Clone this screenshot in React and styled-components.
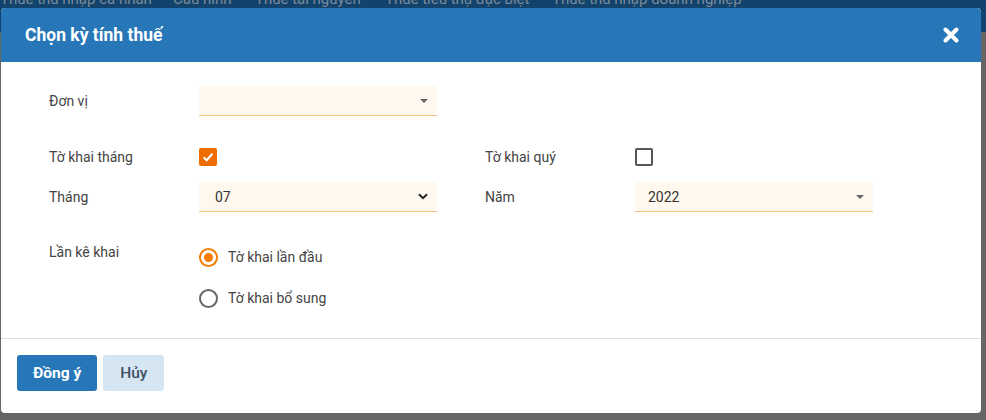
import React, { useState } from "react";
import styled, { createGlobalStyle } from "styled-components";

const GlobalStyle = createGlobalStyle`
  html, body {
    margin: 0;
    padding: 0;
    width: 986px;
    height: 420px;
    overflow: hidden;
    font-family: Roboto, "Liberation Sans", sans-serif;
  }
`;

const Page = styled.div`
  position: relative;
  width: 986px;
  height: 420px;
  background: #666666;
  overflow: hidden;
`;

const TopNav = styled.nav`
  height: 32px;
  background: #11436c;
  display: flex;
  align-items: flex-start;
  font-size: 15px;
  color: #7d8a97;
  white-space: nowrap;
`;

const NavItem = styled.span`
  display: block;
  flex: none;
  width: ${({ $w }) => ($w ? `${$w}px` : "auto")};
  margin-top: -10px;
`;

const Modal = styled.div`
  position: absolute;
  left: 1px;
  top: 8px;
  width: 980px;
  height: 405px;
  background: #fff;
  border-radius: 4px;
  overflow: hidden;
  display: flex;
  flex-direction: column;
`;

const Header = styled.div`
  height: 54px;
  flex: none;
  background: #2777b8;
  display: flex;
  align-items: center;
  justify-content: space-between;
  padding: 0 22px 0 24px;
`;

const Title = styled.h4`
  margin: 0;
  color: #fff;
  font-size: 17.5px;
  font-weight: 700;
`;

const CloseButton = styled.button`
  border: 0;
  background: none;
  padding: 0;
  display: flex;
  cursor: pointer;
`;

const Body = styled.div`
  flex: 1;
  padding: 24px 0 0 48px;
  border-bottom: 1px solid #dcdfe8;
`;

const Row = styled.div`
  display: grid;
  grid-template-columns: 150px 238px 48px 150px 238px;
  align-items: center;
  height: ${({ $h }) => $h || 30}px;
  margin-bottom: ${({ $mb }) => $mb || 0}px;
`;

const Label = styled.label`
  font-size: 14px;
  color: #444;
  align-self: ${({ $top }) => ($top ? "start" : "center")};
`;

const SelectBox = styled.div`
  height: 30px;
  box-sizing: border-box;
  background: #fef8ee;
  border-bottom: 1px solid #f6c47f;
  display: flex;
  align-items: center;
  justify-content: space-between;
  padding: 0 9px 0 ${({ $pl }) => $pl || 13}px;
  font-size: 14px;
  color: #333;
`;

const Caret = styled.span`
  width: 0;
  height: 0;
  border-left: 4px solid transparent;
  border-right: 4px solid transparent;
  border-top: 4px solid #666;
`;

const Check = styled.span`
  width: 18px;
  height: 18px;
  box-sizing: border-box;
  border-radius: 2px;
  background: ${({ $on }) => ($on ? "#ef6c00" : "#fff")};
  border: ${({ $on }) => ($on ? "none" : "2px solid #555")};
  display: flex;
  align-items: center;
  justify-content: center;
  cursor: pointer;
`;

const RadioGroup = styled.div`
  display: flex;
  flex-direction: column;
  gap: 22px;
  margin-top: -3px;
`;

const RadioItem = styled.label`
  display: flex;
  align-items: center;
  gap: 10px;
  font-size: 14px;
  color: #444;
  cursor: pointer;
`;

const RadioCircle = styled.span`
  width: 19px;
  height: 19px;
  box-sizing: border-box;
  border-radius: 50%;
  border: 2px solid ${({ $on }) => ($on ? "#f57c00" : "#666")};
  display: flex;
  align-items: center;
  justify-content: center;
  &::after {
    content: "";
    width: 9px;
    height: 9px;
    border-radius: 50%;
    background: ${({ $on }) => ($on ? "#f57c00" : "transparent")};
  }
`;

const Footer = styled.div`
  height: 74px;
  flex: none;
  display: flex;
  align-items: flex-start;
  gap: 6px;
  padding: 16px 0 0 16px;
  box-sizing: border-box;
`;

const Button = styled.button`
  height: 36px;
  border: 0;
  border-radius: 3px;
  font-family: Roboto, "Liberation Sans", sans-serif;
  font-size: 15.5px;
  padding: 0 ${({ $px }) => $px || 16}px;
  background: ${({ $primary }) => ($primary ? "#2777b8" : "#d6e5f2")};
  color: ${({ $primary }) => ($primary ? "#fff" : "#3d4f63")};
  font-weight: ${({ $primary }) => ($primary ? 700 : 500)};
  cursor: pointer;
`;

const CheckIcon = () => (
  <svg width="12" height="10" viewBox="0 0 12 10">
    <path d="M1.5 5.2 L4.6 8.2 L10.5 1.8" fill="none" stroke="#fff" strokeWidth="2" />
  </svg>
);

const CloseIcon = () => (
  <svg width="16" height="16" viewBox="0 0 16 16">
    <path d="M2.5 2.5 L13.5 13.5 M13.5 2.5 L2.5 13.5" stroke="#fff" strokeWidth="4" strokeLinecap="round" />
  </svg>
);

const Chevron = () => (
  <svg width="10" height="7" viewBox="0 0 10 7">
    <path d="M1 1.2 L5 5.2 L9 1.2" fill="none" stroke="#222" strokeWidth="2" />
  </svg>
);

export default function App() {
  const [monthly, setMonthly] = useState(true);
  const [quarterly, setQuarterly] = useState(false);
  const [first, setFirst] = useState(true);

  return (
    <Page>
      <GlobalStyle />
      <TopNav>
        <NavItem $w={173}>Thuế thu nhập cá nhân</NavItem>
        <NavItem $w={82}>Cấu hình</NavItem>
        <NavItem $w={130}>Thuế tài nguyên</NavItem>
        <NavItem $w={167}>Thuế tiêu thụ đặc biệt</NavItem>
        <NavItem>Thuế thu nhập doanh nghiệp</NavItem>
      </TopNav>
      <Modal>
        <Header>
          <Title>Chọn kỳ tính thuế</Title>
          <CloseButton>
            <CloseIcon />
          </CloseButton>
        </Header>
        <Body>
          <Row $mb={26}>
            <Label>Đơn vị</Label>
            <SelectBox>
              <span />
              <Caret />
            </SelectBox>
          </Row>
          <Row $mb={10}>
            <Label>Tờ khai tháng</Label>
            <div>
              <Check $on={monthly} onClick={() => setMonthly(!monthly)}>
                {monthly && <CheckIcon />}
              </Check>
            </div>
            <span />
            <Label>Tờ khai quý</Label>
            <div>
              <Check $on={quarterly} onClick={() => setQuarterly(!quarterly)}>
                {quarterly && <CheckIcon />}
              </Check>
            </div>
          </Row>
          <Row $mb={32}>
            <Label>Tháng</Label>
            <SelectBox $pl={16}>
              <span>07</span>
              <Chevron />
            </SelectBox>
            <span />
            <Label>Năm</Label>
            <SelectBox>
              <span>2022</span>
              <Caret />
            </SelectBox>
          </Row>
          <Row $h={70}>
            <Label $top>Lần kê khai</Label>
            <RadioGroup>
              <RadioItem onClick={() => setFirst(true)}>
                <RadioCircle $on={first} />
                Tờ khai lần đầu
              </RadioItem>
              <RadioItem onClick={() => setFirst(false)}>
                <RadioCircle $on={!first} />
                Tờ khai bổ sung
              </RadioItem>
            </RadioGroup>
          </Row>
        </Body>
        <Footer>
          <Button $primary>Đồng ý</Button>
          <Button $px={17}>Hủy</Button>
        </Footer>
      </Modal>
    </Page>
  );
}
